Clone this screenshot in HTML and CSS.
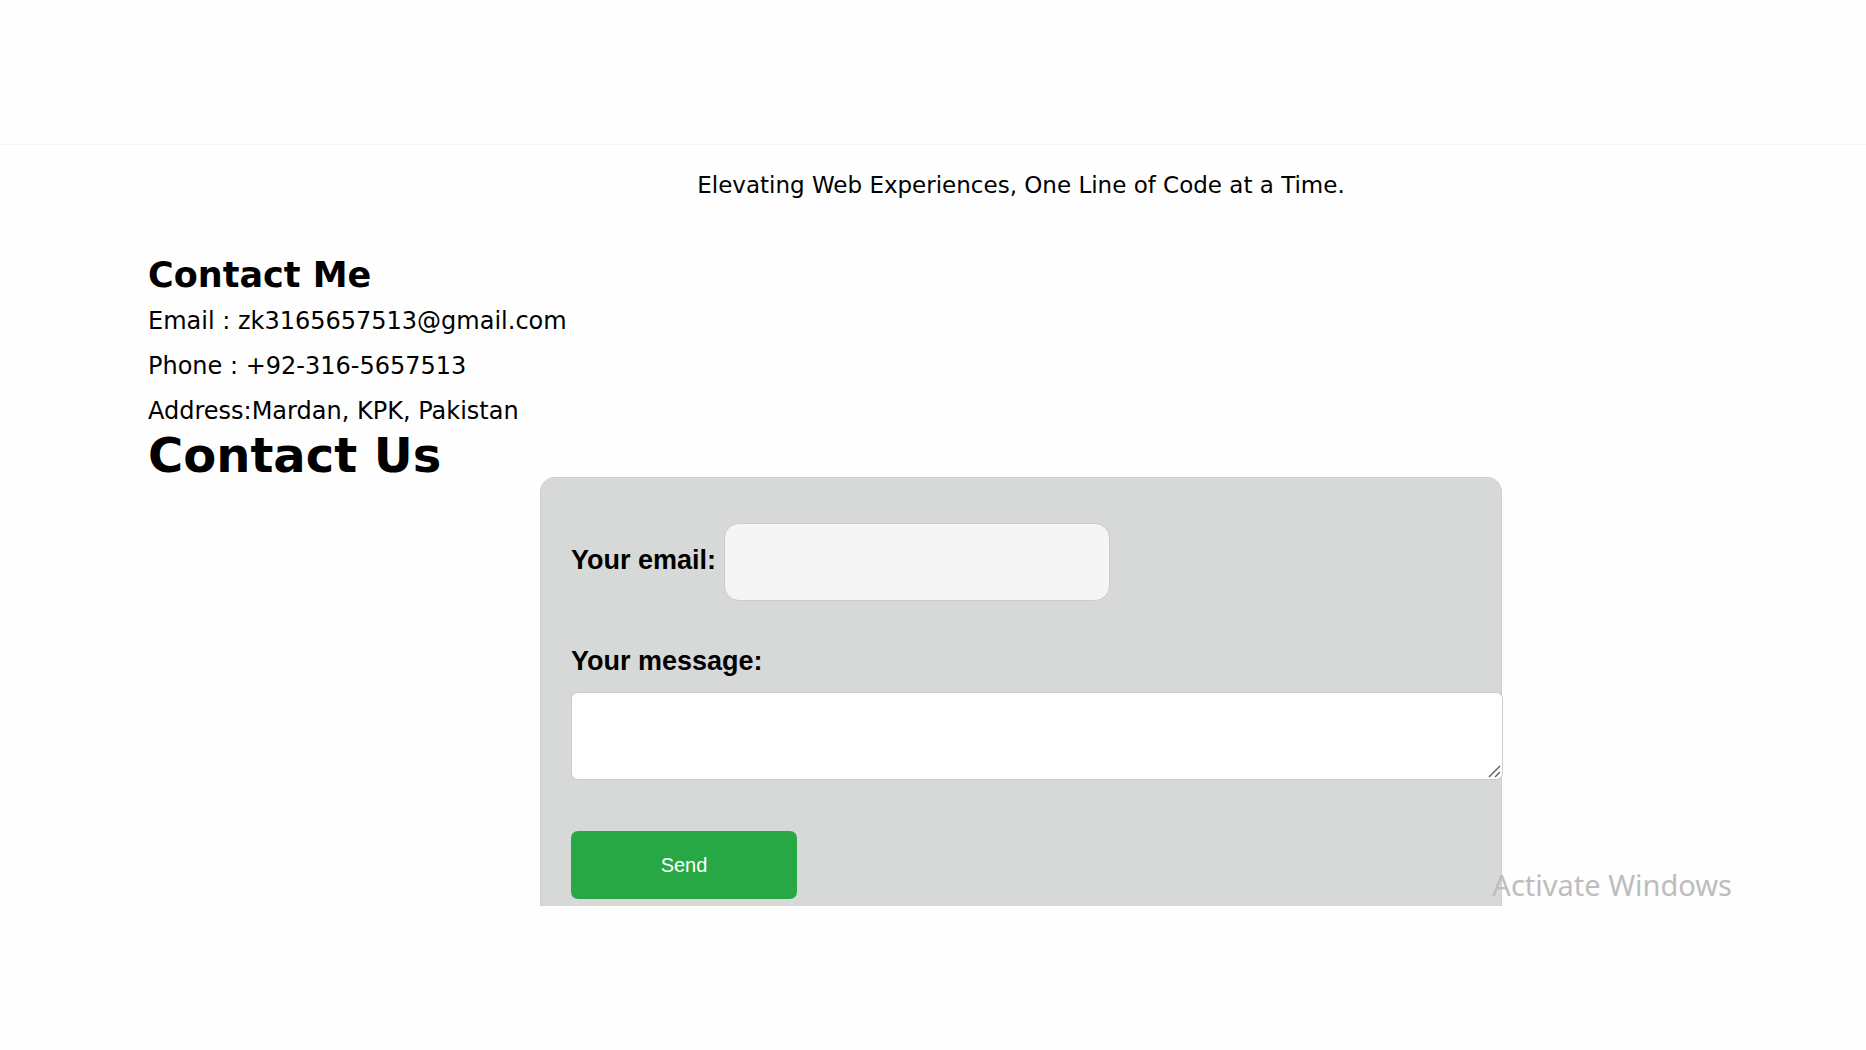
FILE: index.html
```html
<!DOCTYPE html>
<html lang="en">
<head>
<meta charset="utf-8">
<meta name="viewport" content="width=device-width, initial-scale=1">
<title>Contact</title>
<link rel="stylesheet" href="styles.css">
</head>
<body>
<header class="header"></header>
<main class="main">
  <p class="tagline">Elevating Web Experiences, One Line of Code at a Time.</p>
  <section class="contact">
    <h2 class="contact-title">Contact Me</h2>
    <p class="detail">Email : zk3165657513@gmail.com</p>
    <p class="detail">Phone : +92-316-5657513</p>
    <p class="detail">Address:Mardan, KPK, Pakistan</p>
    <h1 class="form-title">Contact Us</h1>
    <form class="form">
      <div class="row">
        <label class="label" for="email">Your email:</label>
        <input class="email" id="email" type="email">
      </div>
      <label class="label" for="message">Your message:</label>
      <textarea class="message" id="message"></textarea>
      <button class="send" type="submit">Send</button>
    </form>
  </section>
  <div class="watermark">Activate Windows</div>
</main>
</body>
</html>
```
FILE: styles.css
```css
* { box-sizing: border-box; }
body {
  margin: 0;
  background: #fefefe;
  color: #000;
  font-family: Verdana, "DejaVu Sans", sans-serif;
  font-size: 24px;
}
h1, h2, p { margin: 0; }
.header {
  height: 145px;
  border-bottom: 1px solid #f5f5f5;
}
.main { position: relative; }
.tagline {
  padding: 24px 0 0 176px;
  font-size: 23px;
  line-height: 32px;
  text-align: center;
}
.contact { padding: 50px 0 0 148px; }
.contact-title {
  font-size: 35px;
  line-height: 48px;
}
.detail { line-height: 45px; }
.form-title {
  font-size: 48px;
  line-height: 43px;
}
.form {
  width: 56%;
  margin-left: 392px;
  padding: 45px 0 7px 30px;
  border: 1px solid #cdcfce;
  border-bottom: 0;
  border-radius: 15px 15px 0 0;
  background: #d7d9d8;
  font-family: "Liberation Sans", Arial, sans-serif;
}
.row {
  display: flex;
  align-items: center;
  gap: 8px;
  margin-bottom: 44px;
}
.label {
  display: block;
  font-size: 27px;
  font-weight: bold;
  line-height: 32px;
}
.row .label { padding-bottom: 4px; }
.email {
  width: 386px;
  height: 78px;
  padding: 12px;
  border: 1px solid #ccc;
  border-radius: 15px;
  background: #f5f5f5;
  font-size: 20px;
}
.message {
  display: block;
  width: calc(100% + 2px);
  height: 88px;
  margin: 15px 0 51px;
  padding: 12px;
  border: 1px solid #ccc;
  border-radius: 7px;
  background: #fff;
  font-size: 20px;
}
.message::-webkit-resizer {
  background: url("data:image/svg+xml,%3Csvg xmlns='http://www.w3.org/2000/svg' width='15' height='15'%3E%3Cpath d='M2 13 13 2M8 13l5-5' stroke='%23666' stroke-width='1.5'/%3E%3C/svg%3E") no-repeat right bottom;
}
.send {
  display: block;
  width: 226px;
  height: 68px;
  border: 0;
  border-radius: 7px;
  background: #28a745;
  color: #fff;
  font-family: inherit;
  font-size: 20px;
}
.watermark {
  position: absolute;
  right: 134px;
  bottom: 0;
  color: #bdbdbd;
  font-family: "Segoe UI", "Noto Sans", sans-serif;
  font-size: 29px;
  line-height: 42px;
}
```
